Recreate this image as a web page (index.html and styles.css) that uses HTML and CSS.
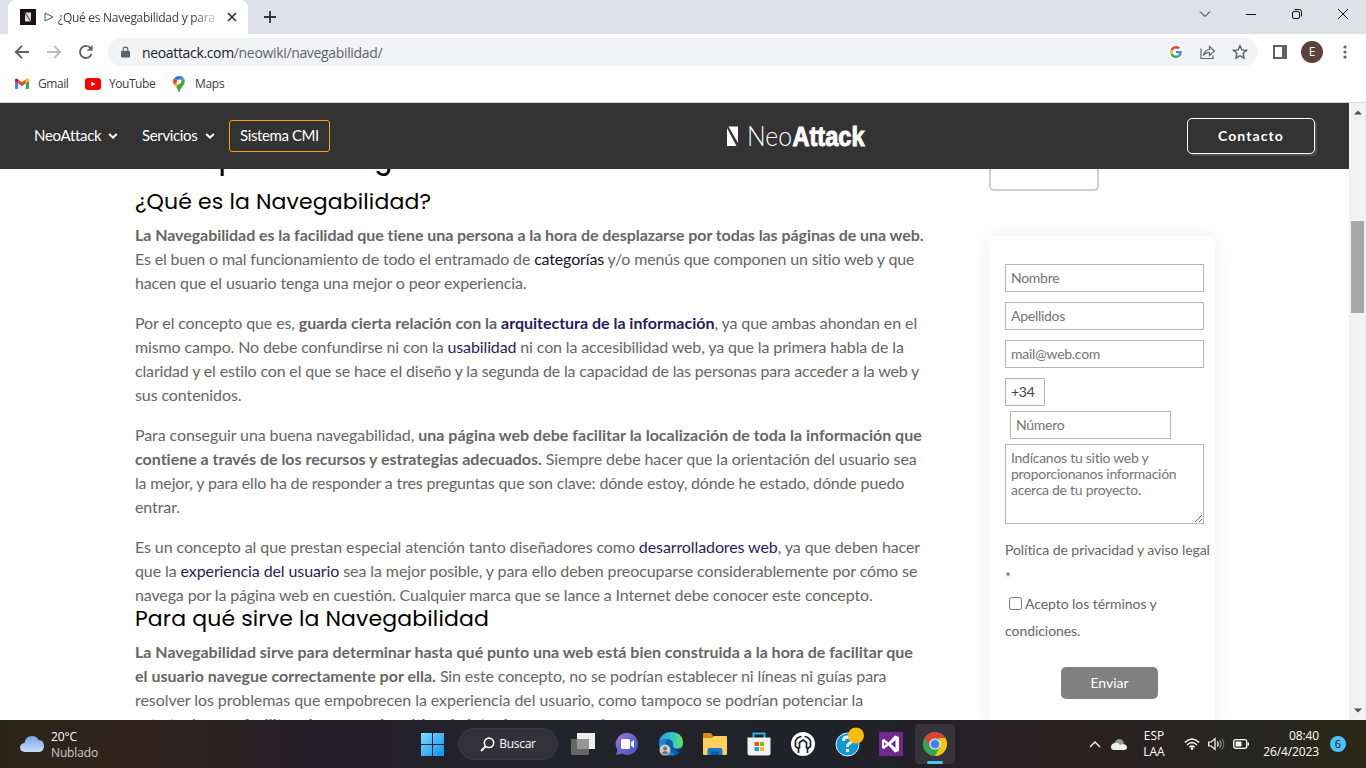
FILE: index.html
```html
<!DOCTYPE html>
<html lang="es">
<head>
<meta charset="utf-8">
<title>¿Qué es Navegabilidad y para qué sirve?</title>
<link rel="stylesheet" href="styles.css">
</head>
<body>
<div class="tabs">
  <div class="tab">
    <svg class="favicon" viewBox="0 0 16 16"><path fill="#1d1210" d="M0 0h16v16H0z"/><path fill="#ddd" d="M5 3.500l6 9V3.500zM5 4.500l5.400 8H5z"/><path d="M5 3.500l6 9" stroke="#555" stroke-width="1"/></svg>
    <svg class="play" viewBox="0 0 10 10"><path d="M1 1l8 4-8 4z" fill="none" stroke="#555"/></svg>
    <span class="tab-title">¿Qué es Navegabilidad y para</span>
    <svg class="tab-close" viewBox="0 0 10 10"><path d="M1 1l8 8M9 1L1 9" stroke="#333" stroke-width="1.700"/></svg>
  </div>
  <svg class="newtab" viewBox="0 0 12 12"><path d="M6 0v12M0 6h12" stroke="#333" stroke-width="1.800"/></svg>
  <div class="wincontrols">
    <svg viewBox="0 0 12 12"><path d="M1 3.500l5 5 5-5"/></svg>
    <svg viewBox="0 0 12 12"><path d="M1 6.500h10"/></svg>
    <svg viewBox="0 0 12 12"><rect x="1.500" y="3.500" width="7" height="7" rx="1.500"/><path d="M3.500 1.500h5q2 0 2 2v5"/></svg>
    <svg viewBox="0 0 12 12"><path d="M1 1l10 10M11 1L1 11"/></svg>
  </div>
</div>
<div class="toolbar">
  <svg class="tool" viewBox="0 0 16 16"><path d="M15 8H2M8 1.800L1.800 8 8 14.200"/></svg>
  <svg class="tool dim" viewBox="0 0 16 16"><path d="M1 8h13M8 1.800L14.200 8 8 14.200"/></svg>
  <svg class="tool" viewBox="0 0 16 16"><path d="M13.600 10A6 6 0 1 1 12.600 4.100"/><path d="M14.600 1v5.800H8.800z" fill="#5f6368" stroke="none"/></svg>
  <div class="omnibox">
    <svg class="lock" viewBox="0 0 10 14"><path fill="#5f6368" d="M1 5h8q1 0 1 1v5.500q0 1-1 1H1q-1 0-1-1V6q0-1 1-1z"/><path d="M2.500 5V3.500a2.500 2.500 0 0 1 5 0V5" fill="none" stroke="#5f6368" stroke-width="1.300"/></svg>
    <span class="url"><b>neoattack.com</b>/neowiki/navegabilidad/</span>
    <span class="google"><svg viewBox="0 0 48 48"><path fill="#EA4335" d="M24 9.500c3.540 0 6.710 1.220 9.210 3.600l6.850-6.850C35.900 2.380 30.470 0 24 0 14.620 0 6.510 5.380 2.560 13.220l7.980 6.190C12.430 13.720 17.740 9.500 24 9.500z"/><path fill="#4285F4" d="M46.980 24.550c0-1.570-.15-3.090-.38-4.550H24v9.020h12.940c-.58 2.960-2.260 5.480-4.780 7.180l7.730 6c4.510-4.180 7.090-10.360 7.090-17.650z"/><path fill="#FBBC05" d="M10.530 28.590c-.48-1.450-.76-2.990-.76-4.590s.27-3.140.76-4.590l-7.980-6.190C.92 16.460 0 20.120 0 24c0 3.880.92 7.540 2.560 10.780l7.970-6.190z"/><path fill="#34A853" d="M24 48c6.480 0 11.930-2.130 15.890-5.810l-7.730-6c-2.150 1.450-4.920 2.300-8.160 2.300-6.260 0-11.570-4.220-13.470-9.910l-7.980 6.190C6.510 42.620 14.620 48 24 48z"/></svg></span>
    <svg class="share" viewBox="0 0 16 16"><path d="M1 4.500v10h12v-3M3.500 11.500q.5-5.500 6-6V2.500l5 4.500-5 4.500V8.500q-4-.3-6 3z"/></svg>
    <svg class="star" viewBox="0 0 16 16"><path d="M8 1.700l1.900 4.200 4.600.5-3.400 3.100.9 4.600L8 11.800l-4 2.300.9-4.600L1.500 6.400l4.600-.5z"/></svg>
  </div>
  <svg class="panel" viewBox="0 0 14 14"><path fill="#5f6368" d="M0 0h14v14H0z"/><path fill="#fff" d="M2 2h7v10H2z"/></svg>
  <span class="avatar">E</span>
  <svg class="dots" viewBox="0 0 4 14"><g fill="#5f6368"><circle cx="2" cy="2" r="1.600"/><circle cx="2" cy="7" r="1.600"/><circle cx="2" cy="12" r="1.600"/></g></svg>
</div>
<div class="bookmarks">
  <svg class="gmail" viewBox="0 0 14 11"><path fill="#4285f4" d="M0 1.500L3.200 4v7H1q-1 0-1-1z"/><path fill="#34a853" d="M14 1.500L10.800 4v7H13q1 0 1-1z"/><path fill="#ea4335" d="M3.200 1.400L7 4.300l3.800-2.900v3.900L7 8.200 3.200 5.300z"/><path fill="#c5221f" d="M0 1.500Q.7-.6 3.200 1.400v3.900L0 2.900z"/><path fill="#fbbc04" d="M14 1.500Q13.300-.6 10.800 1.400v3.900L14 2.900z"/></svg>
  <span class="bm-gmail">Gmail</span>
  <svg class="yt" viewBox="0 0 16 12"><rect width="16" height="12" rx="3" fill="#f00"/><path fill="#fff" d="M6.300 3.500v5l4.200-2.500z"/></svg>
  <span class="bm-yt">YouTube</span>
  <svg class="maps" viewBox="0 0 12 16"><path fill="#ea4335" d="M1.400 2.100L5 5.200 1.300 9Q-1.300 5 1.400 2.100z"/><path fill="#1a73e8" d="M1.400 2.100Q3.200 0 7 0l2 .8L5.500 5z"/><path fill="#fbbc04" d="M1.200 8.800L8.500.8 11 3 3.500 11.300z"/><path fill="#34a853" d="M3.300 11.200L11 2.600Q12.800 6 10.500 9 7 13 6.700 15.500q-.7 1-1.400 0Q5 13 3.300 11.200z"/><path fill="#4285f4" d="M7.500 4.200L11 2.600Q9.800.8 8.700.6L6 3.800z"/><circle cx="6" cy="5.800" r="2.200" fill="#fff"/></svg>
  <span class="bm-maps">Maps</span>
</div>

<div class="viewport">
  <div class="page">
    <header class="site-header">
      <nav>
        <a class="nav-neo">NeoAttack</a><svg class="chev" viewBox="0 0 10 6"><path d="M1.200 1L5 4.600 8.800 1"/></svg>
        <a class="nav-serv">Servicios</a><svg class="chev" viewBox="0 0 10 6"><path d="M1.200 1L5 4.600 8.800 1"/></svg>
        <a class="cmi">Sistema CMI</a>
      </nav>
      <svg class="logo" viewBox="0 0 140 24"><path fill="#fff" d="M2.500 2.500H12v16.500zM1 4L10.500 22H1z"/><text class="logo-thin" x="21" y="21.800" textLength="45" lengthAdjust="spacingAndGlyphs">Neo</text><text class="logo-bold" x="66.500" y="21.800" textLength="72" lengthAdjust="spacingAndGlyphs">Attack</text></svg>
      <a class="contact">Contacto</a>
    </header>
    <div class="columns">
      <article>
        <h1>Concepto de Navegabilidad</h1>
        <h2>¿Qué es la Navegabilidad?</h2>
        <p><strong class="k2">La Navegabilidad es la facilidad que tiene una persona a la hora de desplazarse por todas las páginas de una web.</strong><br><span class="k5">Es el buen o mal funcionamiento de todo el entramado de <a class="dark">categorías</a> y/o menús que componen un sitio web y que</span><br><span class="k4">hacen que el usuario tenga una mejor o peor experiencia.</span></p>
        <p><span class="k4">Por el concepto que es, </span><strong class="k1">guarda cierta relación con la <a>arquitectura de la información</a></strong><span class="k3">, ya que ambas ahondan en el</span><br><span class="k4">mismo campo. No debe confundirse ni con la <a>usabilidad</a> ni con la accesibilidad web, ya que la primera habla de la</span><br><span class="k5">claridad y el estilo con el que se hace el diseño y la segunda de la capacidad de las personas para acceder a la web y</span><br><span class="k3">sus contenidos.</span></p>
        <p><span class="k3">Para conseguir una buena navegabilidad, </span><strong class="k0">una página web debe facilitar la localización de toda la información que</strong><br><strong class="k1">contiene a través de los recursos y estrategias adecuados.</strong><span class="k3"> Siempre debe hacer que la orientación del usuario sea</span><br><span class="k5">la mejor, y para ello ha de responder a tres preguntas que son clave: dónde estoy, dónde he estado, dónde puedo</span><br><span class="k3">entrar.</span></p>
        <p class="tight"><span class="k3">Es un concepto al que prestan especial atención tanto diseñadores como <a>desarrolladores web</a>, ya que deben hacer</span><br><span class="k3">que la <a>experiencia del usuario</a> sea la mejor posible, y para ello deben preocuparse considerablemente por cómo se</span><br><span class="k4">navega por la página web en cuestión. Cualquier marca que se lance a Internet debe conocer este concepto.</span></p>
        <h2>Para qué sirve la Navegabilidad</h2>
        <p><strong class="k1">La Navegabilidad sirve para determinar hasta qué punto una web está bien construida a la hora de facilitar que</strong><br><strong class="k0">el usuario navegue correctamente por ella.</strong><span class="k4"> Sin este concepto, no se podrían establecer ni líneas ni guías para</span><br><span class="k2">resolver los problemas que empobrecen la experiencia del usuario, como tampoco se podrían potenciar la</span><br><span class="k1">estrategia <strong>para facilitar el acceso a los sitios de interés</strong> que se requieren.</span></p>
      </article>
      <aside>
        <div class="box-end"></div>
        <form class="card">
          <input placeholder="Nombre">
          <input placeholder="Apellidos">
          <input placeholder="mail@web.com">
          <input class="prefix" value="+34">
          <input class="number" placeholder="Número">
          <textarea placeholder="Indícanos tu sitio web y proporcionanos información acerca de tu proyecto."></textarea>
          <div class="legal">Política de privacidad y aviso legal<br>*<br><label><input type="checkbox">Acepto los términos y</label><br>condiciones.</div>
          <button type="button">Enviar</button>
        </form>
      </aside>
    </div>
  </div>
  <div class="scrollbar">
    <svg viewBox="0 0 8 5"><path fill="#505050" d="M0 4.500h8L4 .5z"/></svg>
    <div class="thumb"></div>
    <svg class="down" viewBox="0 0 8 5"><path fill="#505050" d="M0 .5h8l-4 4z"/></svg>
  </div>
</div>

<footer class="taskbar">
  <div class="weather">
    <svg viewBox="0 0 24 16"><defs><linearGradient id="cl" x2="0" y2="1"><stop stop-color="#7aa2ea"/><stop offset="1" stop-color="#c9dcfb"/></linearGradient></defs><path fill="url(#cl)" d="M5 16Q0 15.500 0 11.500 0 7.500 4.500 7 5.500 0 12 0q5 0 6.500 4Q24 4 24 10q0 5.500-5 6z"/></svg>
    <div>20°C<br><span>Nublado</span></div>
  </div>
  <div class="apps">
    <span class="app"><svg width="23" height="23" viewBox="0 0 23 23"><defs><linearGradient id="wi" x2="1" y2="1"><stop stop-color="#7ddcff"/><stop offset="1" stop-color="#0a91f5"/></linearGradient></defs><path fill="url(#wi)" d="M0 0h11v11H0zM12 0h11v11H12zM0 12h11v11H0zM12 12h11v11H12z"/></svg></span>
    <span class="search"><svg width="15" height="15" viewBox="0 0 15 15"><circle cx="9" cy="5.800" r="4.700" fill="none" stroke="#fff" stroke-width="1.600"/><path d="M5.600 9.300L1 14" stroke="#fff" stroke-width="1.800"/></svg>Buscar</span>
    <span class="app"><svg width="24" height="23" viewBox="0 0 24 23"><path fill="#eee" d="M6 0h18v16H6z"/><path fill="#666" d="M0 6h18v16H0z"/><path fill="#969696" d="M6 6h12v10H6z"/></svg></span>
    <span class="app"><svg width="24" height="24" viewBox="0 0 24 24"><defs><linearGradient id="te" x2="1" y2="1"><stop stop-color="#a473cd"/><stop offset=".5" stop-color="#6868cd"/><stop offset="1" stop-color="#4456c5"/></linearGradient></defs><path fill="url(#te)" d="M12 1a11 11 0 1 1-5 20.800L1 23l1.500-5A11 11 0 0 1 12 1z"/><rect x="6" y="7" width="9" height="10" rx="1.500" fill="#fff"/><path fill="#fff" d="M16 10.500l3-2.500v8l-3-2.500z"/></svg></span>
    <span class="app"><svg width="24" height="24" viewBox="0 0 24 24"><defs><linearGradient id="ed"><stop stop-color="#279fe5"/><stop offset=".6" stop-color="#36c8c7"/><stop offset="1" stop-color="#6ce34e"/></linearGradient></defs><circle cx="12" cy="12" r="12" fill="#0b5eae"/><path fill="url(#ed)" d="M0 10Q2 0 12 0q11 0 12 10 0 6.500-6 6.500-5 0-4-3Q15 8 9 7 3 7 0 10z"/><path fill="#168bd5" d="M0 11Q3 7 8 8 5 12 7 16q3 5 9 5-4 4-10 1Q0 18 0 11z"/><path fill="#20242d" d="M14 14q-1 3 4 3.500 3 0 6.500-1.500v3l-3 1q-6.500-1-7.500-6z"/><circle cx="6" cy="18" r="5.500" fill="#ccc"/><circle cx="6" cy="16.500" r="2" fill="#777"/><path fill="#777" d="M2.500 21q3.500-4 7 0-3.500 3-7 0z"/></svg></span>
    <span class="app"><svg width="24" height="22" viewBox="0 0 24 22"><path fill="#d48e09" d="M0 1q0-1 1-1h7l2 3v4H0z"/><path fill="#ffd05b" d="M0 5h9l2-2h12q1 0 1 1v17q0 1-1 1H1q-1 0-1-1z"/><path fill="#1477c8" d="M4.500 22v-5q0-2 2-2h11q2 0 2 2v5z"/><path fill="#0b5da8" d="M8 18.500h8v3.500H8z"/></svg></span>
    <span class="app"><svg width="24" height="24" viewBox="0 0 24 24"><path d="M6.500 6V1.500h11V6" fill="none" stroke="#25b6ee" stroke-width="2"/><path fill="#f1f1f1" d="M.5 5.500h23V21q0 2.500-2.500 2.500H3Q.5 23.500.5 21z"/><path fill="#f35325" d="M7.500 10H12v4H7.500z"/><path fill="#81bc06" d="M13 10h4v4h-4z"/><path fill="#05a6f0" d="M7.500 15H12v4H7.500z"/><path fill="#ffba08" d="M13 15h4v4h-4z"/></svg></span>
    <span class="app"><svg width="24" height="24" viewBox="0 0 24 24"><circle cx="12" cy="12" r="12" fill="#fff"/><g fill="none" stroke="#202228" stroke-width="1.700"><path d="M10.500 4.500Q6 5 4.500 9v5.500l3 2V21M13.500 4.500Q18 5 19.500 9v5.500l-3 2V21M8.500 16.500v-6L12 8l3.500 2.500v6"/></g></svg></span>
    <span class="app"><svg class="help" width="30" height="30" viewBox="0 0 30 30"><circle cx="13.500" cy="17.500" r="11.500" fill="#1597d4" stroke="#d9edf5"/><path d="M9.500 14q0-4 4-4t4 3.500q0 2-2.500 3.200-1.500 1-1.500 3.300M13.500 22v3" fill="none" stroke="#fff" stroke-width="2.800"/><circle cx="22" cy="8.500" r="8" fill="#ffbd0b"/></svg></span>
    <span class="app"><svg width="24" height="24" viewBox="0 0 24 24"><path fill="#702b91" d="M0 0h24v24H0z"/><path fill="#fff" fill-rule="evenodd" d="M3 8l2-1 4.500 3.500L16 3.500l4 1.500v14l-4 1.500-6.500-7L5 17l-2-1zM5 10v4l2-2zM16.500 8L12 12l4.500 4z"/></svg></span>
    <span class="app active"><svg width="24" height="24" viewBox="0 0 24 24"><circle cx="12" cy="12" r="12" fill="#33a853"/><path fill="#db4437" d="M1.600 6A12 12 0 0 1 22.400 6H12v5L7 15z"/><path fill="#fbc116" d="M22.400 6A12 12 0 0 1 12 24l5-9-1-9z"/><circle cx="12" cy="12" r="5.600" fill="#fff"/><circle cx="12" cy="12" r="4.500" fill="#3e82f1"/></svg></span>
  </div>
  <div class="tray">
    <svg class="up" viewBox="0 0 12 8"><path d="M1 7l5-5 5 5" fill="none" stroke="#fff" stroke-width="1.300"/></svg>
    <svg class="cloud" viewBox="0 0 16 11"><path fill="#999" d="M3 7q0-6 5-7 4 0 5 4l-3 4z"/><path fill="#eee" d="M3 11q-3 0-3-3 0-4 5-4 2-1 4 2l2-1q5 0 5 3.500 0 2.500-3 2.500z"/></svg>
    <div class="lang">ESP<br>LAA</div>
    <svg class="wifi" viewBox="0 0 16 12"><g fill="none" stroke="#fff" stroke-width="1.300"><path d="M.8 4.500q7.200-7 14.400 0M3 7q5-5 10 0M5.300 9.200q2.700-2.500 5.400 0"/></g><circle cx="8" cy="10.600" r="1.300" fill="#fff"/></svg>
    <svg class="vol" viewBox="0 0 17 14"><g fill="none" stroke="#fff" stroke-width="1.200"><path d="M.7 5h2.500L7 1.500v11L3.200 9H.7zM9.200 4.500q2 2.500 0 5"/><path d="M11.500 3q3 4 0 8" stroke="#999"/><path d="M13.800 1.200q4 6 0 11.600" stroke="#666"/></g></svg>
    <svg class="bat" viewBox="0 0 16 10"><rect x=".7" y=".7" width="13" height="8.600" rx="2" fill="none" stroke="#fff" stroke-width="1.300"/><path fill="#fff" d="M2.500 2.500h6v5h-6zM14.500 3.500H16v3h-1.500z"/></svg>
    <div class="clock">08:40<br>26/4/2023</div>
    <span class="count">6</span>
  </div>
</footer>
</body>
</html>
```
FILE: styles.css
```css
* { box-sizing: border-box; }
body { margin: 0; width: 1366px; height: 768px; overflow: hidden; display: flex; flex-direction: column; background: #fff; font-family: "Open Sans", "Noto Sans", sans-serif; font-size: 12px; color: #3c4043; }
svg { display: block; flex: none; overflow: visible; }

/* Browser chrome */
.tabs { height: 34px; flex: none; background: #dee1e6; display: flex; align-items: center; padding-left: 8px; }
.tab { width: 240px; height: 34px; background: #fff; border-radius: 8px 8px 0 0; display: flex; align-items: center; padding-left: 12px; }
.favicon { width: 16px; height: 16px; }
.play { width: 10px; height: 10px; margin-left: 8px; }
.tab-title { width: 160px; margin-left: 4px; letter-spacing: -.28px; white-space: nowrap; overflow: hidden; -webkit-mask-image: linear-gradient(90deg, #000 135px, transparent 164px); }
.tab-close { width: 10px; height: 10px; margin-left: 9px; }
.newtab { width: 12px; height: 12px; margin-left: 16px; }
.wincontrols { margin-left: auto; display: flex; gap: 34px; padding: 0 17px 6px 0; }
.wincontrols svg { width: 12px; height: 12px; fill: none; stroke: #111; stroke-width: 1; }
.toolbar { height: 36px; flex: none; display: flex; align-items: center; padding-left: 14px; }
.tool { width: 16px; height: 16px; margin-right: 16px; fill: none; stroke: #5f6368; stroke-width: 1.9; }
.tool.dim { stroke: #babcbe; }
.omnibox { width: 1150px; height: 28px; margin-left: -2px; border-radius: 14px; background: #f1f3f4; display: flex; align-items: center; padding-left: 13px; }
.lock { width: 9px; height: 13px; }
.url { font-size: 14px; margin-left: 12px; letter-spacing: -.34px; color: #5f6368; width: 1026px; }
.url b { font-weight: 400; color: #202124; }
.google { width: 16px; height: 16px; border-radius: 50%; background: #fff; display: grid; place-items: center; }
.google svg { width: 12px; height: 12px; }
.share, .star { width: 16px; height: 16px; margin-left: 16px; fill: none; stroke: #5f6368; stroke-width: 1.2; }
.star { stroke-width: 1.5; }
.panel { width: 14px; height: 14px; margin-left: 15px; }
.avatar { width: 22px; height: 22px; margin-left: 14px; border-radius: 50%; background: #5d4037; color: #fff; text-align: center; line-height: 22px; }
.dots { width: 4px; height: 14px; margin-left: 20px; }
.bookmarks { height: 33px; flex: none; border-bottom: 1px solid #d6d6d6; display: flex; align-items: center; padding: 0 0 5px 15px; }
.gmail { width: 14px; height: 11px; margin-right: 9px; }
.bm-gmail, .bm-yt, .bm-maps { letter-spacing: -.45px; }
.bm-maps { letter-spacing: -.3px; }
.bm-gmail { width: 47px; }
.yt { width: 16px; height: 12px; margin-right: 8px; }
.bm-yt { width: 64px; }
.maps { width: 12px; height: 16px; margin-right: 10px; }

/* Page */
.viewport { height: 617px; flex: none; display: flex; overflow: hidden; }
.page { width: 1349px; font-family: Lato, sans-serif; }
.site-header { height: 66px; position: relative; z-index: 2; background: #333; color: #fff; display: flex; align-items: center; padding: 0 34px; font-size: 15px; }
nav { display: flex; align-items: center; width: 692px; }
nav a { flex: none; white-space: nowrap; padding-bottom: 2px; letter-spacing: -.3px; }
.nav-neo { width: 74px; }
.nav-serv { width: 63px; margin-left: 24px; letter-spacing: -.35px; }
.chev { width: 10px; height: 6px; fill: none; stroke: #fff; stroke-width: 2; }
nav .cmi { width: 101px; height: 32px; border: 1px solid #ff9f0f; border-radius: 3px; line-height: 29px; padding: 0; text-align: center; margin-left: 14px; letter-spacing: -.4px; }
.logo { width: 140px; height: 24px; }
.logo .logo-thin { font-family: Lato, sans-serif; font-weight: 300; font-size: 27px; fill: #fff; }
.logo .logo-bold { font-family: "Liberation Sans", sans-serif; font-size: 27px; font-weight: 700; fill: #fff; stroke: #fff; stroke-width: 1; }
.contact { margin-left: auto; width: 128px; height: 36px; border: 1px solid #fff; border-radius: 5px; box-shadow: 2px 2px 0 #505050; line-height: 34px; text-align: center; font-size: 14px; font-weight: 700; letter-spacing: 1.1px; }
.columns { display: flex; padding-left: 135px; }
article { width: 854px; color: #666; font-size: 16px; line-height: 24px; white-space: nowrap; margin-top: -27px; }
h1, h2 { font-family: Poppins, Inter, sans-serif; color: #000; margin: 0; }
h1 { font-size: 25.6px; font-weight: 500; line-height: 36px; height: 47px; }
h2 { font-size: 22px; font-weight: 400; line-height: 26px; letter-spacing: .13px; margin-bottom: 8px; }
p { margin: 0 0 16px; }
p.tight { margin-bottom: -1px; }
article a { color: #2a1c5c; }
article a.dark { color: #17112f; }

/* Tracking steps */
.k0 { letter-spacing: .01px; }
.k1 { letter-spacing: -.01px; }
.k2 { letter-spacing: -.06px; }
.k3 { letter-spacing: -.1px; }
.k4 { letter-spacing: -.13px; }
.k5 { letter-spacing: -.16px; }

.box-end { width: 110px; height: 22px; border: 2px solid #d0d0d0; border-top: 0; border-radius: 0 0 5px 5px; }
.card { width: 226px; height: 500px; margin-top: 45px; padding: 28px 11px 0 16px; border-radius: 5px; box-shadow: 0 0 20px rgba(0,0,0,.07); display: flex; flex-direction: column; font-size: 14px; color: #666; }
.card > input, textarea { width: 199px; height: 28px; flex: none; border: 1px solid #b5b5b5; padding: 0 5px 2px; margin: 0 0 10px; font: 14px Lato, sans-serif; letter-spacing: -.27px; color: #444; background: #fff; }
::placeholder { color: #757575; }
.card > .prefix { width: 40px; margin-bottom: 5px; }
.card > .number { width: 161px; margin: 0 0 5px 5px; }
textarea { height: 80px; padding: 5px; line-height: 16px; margin-bottom: 12px; }
.legal { line-height: 27px; white-space: nowrap; height: 108px; letter-spacing: -.06px; }
.legal input { margin: 0 3px 0 4px; width: 13px; height: 13px; vertical-align: -1px; }
button { width: 97px; height: 32px; margin: 23px 0 0 56px; border: 0; border-radius: 5px; background: #808080; color: #fff; font: 14px Lato, sans-serif; padding: 0 0 2px; }
.scrollbar { width: 17px; background: #f1f1f1; display: flex; flex-direction: column; align-items: center; padding: 7px 0; }
.scrollbar svg { width: 8px; height: 5px; }
.thumb { width: 13px; height: 92px; margin-top: 106px; background: #a8a8a8; }
.scrollbar .down { margin-top: auto; }

/* Taskbar */
.taskbar { height: 48px; flex: none; position: relative; z-index: 2; background: linear-gradient(90deg, #2a2418, #30231c 10%, #241f27 23%, #22232b 38%, #20222a 62%, #2a2021 78%, #252623 90%, #2b2817); color: #fff; display: flex; line-height: 16px; }
.weather { width: 410px; display: flex; padding: 9px 0 0 20px; gap: 7px; letter-spacing: -.15px; }
.weather svg { width: 24px; height: 16px; margin-top: 7px; }
.weather span { color: #ccc; }
.apps { display: flex; align-items: center; }
.app { width: 44px; height: 40px; display: grid; place-items: center; }
.help { margin: -5px 0 0 4px; }
.search { width: 100px; height: 32px; margin: 0 3px 0 4px; border-radius: 16px; background: #323238; border: 1px solid #3a3a40; display: flex; align-items: center; justify-content: center; gap: 4px; letter-spacing: -.3px; }
.active { width: 40px; margin-left: 2px; border-radius: 4px; background: #34343a; position: relative; }
.active::after { content: ""; position: absolute; width: 16px; height: 3px; border-radius: 2px; bottom: 0; left: 12px; background: #4cc2ff; }
.tray { margin-left: auto; padding-right: 20px; display: flex; align-items: center; }
.up { width: 12px; height: 8px; }
.cloud { width: 16px; height: 11px; margin-left: 10px; }
.lang { width: 22px; margin-left: 16px; display: flex; flex-direction: column; align-items: center; text-align: center; }
.wifi { width: 16px; height: 12px; margin-left: 19px; }
.vol { width: 17px; height: 14px; margin-left: 8px; }
.bat { width: 16px; height: 10px; margin-left: 8px; }
.clock { width: 70px; text-align: right; letter-spacing: -.13px; }
.count { width: 16px; height: 16px; margin-left: 11px; border-radius: 50%; background: #4cc2ff; color: #111; font-size: 11px; text-align: center; }
```
